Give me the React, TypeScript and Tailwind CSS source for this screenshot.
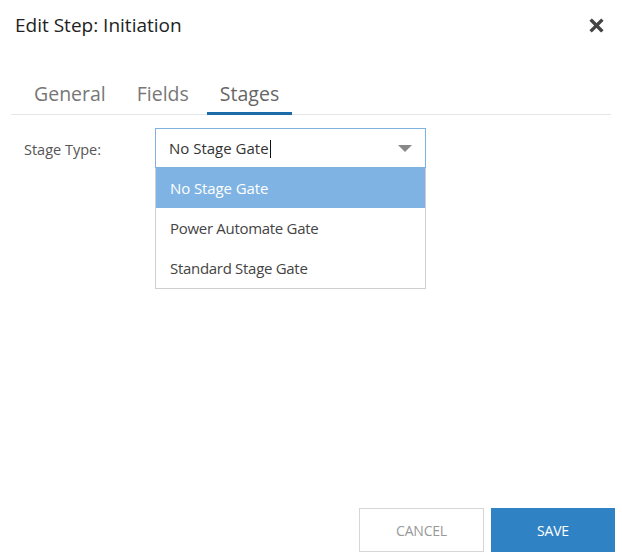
import * as React from "react";

const options = ["No Stage Gate", "Power Automate Gate", "Standard Stage Gate"];

const tabs = ["General", "Fields", "Stages"];

export default function App() {
  const [active] = React.useState("Stages");
  const [selected] = React.useState(options[0]);

  return (
    <div
      className="relative flex h-[559px] w-[622px] flex-col bg-white text-[#333]"
      style={{ fontFamily: '"Open Sans", "Noto Sans", sans-serif' }}
    >
      {/* header */}
      <div className="flex h-[50px] items-center justify-between pl-[15px] pr-[18px]">
        <h2 className="text-[19px] font-normal text-[#222]">
          Edit Step: Initiation
        </h2>
        <button className="flex h-[16px] w-[16px] items-center justify-center">
          <svg viewBox="0 0 16 16" className="h-[15px] w-[15px]">
            <path
              d="M3 3 L13 13 M13 3 L3 13"
              stroke="#444"
              strokeWidth="3.6"
              strokeLinecap="square"
            />
          </svg>
        </button>
      </div>

      {/* tabs */}
      <div className="mx-[11px] mt-[27px] flex gap-[5px] border-b border-[#e6e6e6] pl-[10px]">
        {tabs.map((t) => (
          <div
            key={t}
            className={
              t === active
                ? "mb-[-1px] border-b-[3px] border-[#1b6ca8] px-[13px] pb-[2px] text-[19.5px] leading-[33px] text-[#666]"
                : "mb-[-1px] border-b-[3px] border-transparent px-[13px] pb-[2px] text-[19.5px] leading-[33px] text-[#777]"
            }
          >
            {t}
          </div>
        ))}
      </div>

      {/* form */}
      <div className="mt-[13px] flex items-start pl-[24px]">
        <label className="w-[131px] pt-[14px] text-[14.5px] leading-[16px] text-[#555]">
          Stage Type:
        </label>
        <div className="relative w-[271px]">
          <div className="flex h-[40px] items-center justify-between border border-[#7fb2df] pl-[13px] pr-[13px]">
            <span className="text-[15px] text-[#333]">
              {selected}
              <span className="ml-[1px] inline-block h-[18px] w-[1px] translate-y-[4px] bg-[#111]" />
            </span>
            <svg viewBox="0 0 14 7" className="h-[7px] w-[14px]">
              <path d="M0 0 L14 0 L7 7 Z" fill="#888" />
            </svg>
          </div>
          <ul className="border border-t-0 border-[#cfcfcf] bg-white">
            {options.map((o) => (
              <li
                key={o}
                className={
                  o === selected
                    ? "flex h-[40px] items-center bg-[#7eb3e3] pl-[14px] text-[15px] tracking-[-0.1px] text-white"
                    : "flex h-[40px] items-center pl-[14px] text-[15px] tracking-[-0.3px] text-[#444]"
                }
              >
                {o}
              </li>
            ))}
          </ul>
        </div>
      </div>

      {/* footer */}
      <div className="mt-auto flex justify-end gap-[7px] pb-[7px] pr-[7px]">
        <button className="h-[44px] w-[125px] border border-[#d6d6d6] bg-white text-[14px] tracking-[-0.2px] text-[#999]">
          CANCEL
        </button>
        <button className="h-[44px] w-[124px] bg-[#2f82c4] text-[14px] tracking-[-0.2px] text-white">
          SAVE
        </button>
      </div>
    </div>
  );
}
